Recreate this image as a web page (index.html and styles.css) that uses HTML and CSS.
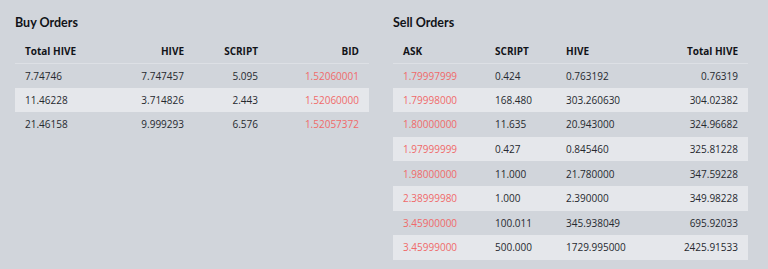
FILE: index.html
```html
<!DOCTYPE html>
<html>
<head>
<meta charset="utf-8">
<link rel="stylesheet" href="styles.css">
</head>
<body>
<div class="page">
  <section class="panel">
    <h2 class="title">Buy Orders</h2>
    <table class="orders buy">
      <colgroup><col class="b1"><col class="b2"><col class="b3"><col class="b4"></colgroup>
      <thead>
        <tr><th class="l">Total HIVE</th><th class="r">HIVE</th><th class="r">SCRIPT</th><th class="r">BID</th></tr>
      </thead>
      <tbody>
        <tr><td class="l">7.74746</td><td class="r">7.747457</td><td class="r">5.095</td><td class="r price">1.52060001</td></tr>
        <tr><td class="l">11.46228</td><td class="r">3.714826</td><td class="r">2.443</td><td class="r price">1.52060000</td></tr>
        <tr><td class="l">21.46158</td><td class="r">9.999293</td><td class="r">6.576</td><td class="r price">1.52057372</td></tr>
      </tbody>
    </table>
  </section>
  <section class="panel">
    <h2 class="title">Sell Orders</h2>
    <table class="orders sell">
      <colgroup><col class="s1"><col class="s2"><col class="s3"><col class="s4"></colgroup>
      <thead>
        <tr><th class="l">ASK</th><th class="l">SCRIPT</th><th class="l">HIVE</th><th class="r">Total HIVE</th></tr>
      </thead>
      <tbody>
        <tr><td class="l price">1.79997999</td><td class="l">0.424</td><td class="l">0.763192</td><td class="r">0.76319</td></tr>
        <tr><td class="l price">1.79998000</td><td class="l">168.480</td><td class="l">303.260630</td><td class="r">304.02382</td></tr>
        <tr><td class="l price">1.80000000</td><td class="l">11.635</td><td class="l">20.943000</td><td class="r">324.96682</td></tr>
        <tr><td class="l price">1.97999999</td><td class="l">0.427</td><td class="l">0.845460</td><td class="r">325.81228</td></tr>
        <tr><td class="l price">1.98000000</td><td class="l">11.000</td><td class="l">21.780000</td><td class="r">347.59228</td></tr>
        <tr><td class="l price">2.38999980</td><td class="l">1.000</td><td class="l">2.390000</td><td class="r">349.98228</td></tr>
        <tr><td class="l price">3.45900000</td><td class="l">100.011</td><td class="l">345.938049</td><td class="r">695.92033</td></tr>
        <tr><td class="l price">3.45999000</td><td class="l">500.000</td><td class="l">1729.995000</td><td class="r">2425.91533</td></tr>
      </tbody>
    </table>
  </section>
</div>
</body>
</html>
```
FILE: styles.css
```css
html, body {
  margin: 0;
  padding: 0;
  background: #d1d5db;
}
body {
  font-family: "Open Sans", "Noto Sans", sans-serif;
  color: #26292f;
}
.page {
  display: grid;
  grid-template-columns: 354px 355px;
  column-gap: 24px;
  padding: 14px 20px 0 15px;
}
.title {
  margin: 0 0 7px 0;
  font-family: Lato, "Open Sans", sans-serif;
  font-size: 12.5px;
  line-height: 18px;
  font-weight: 700;
  color: #111318;
}
.orders {
  width: 100%;
  border-collapse: collapse;
  table-layout: fixed;
}
.orders th {
  font-size: 10px;
  font-weight: 700;
  color: #111318;
  height: 24px;
  padding: 0 10px;
  border-bottom: 1px solid #dde0e5;
  box-sizing: border-box;
}
.orders td {
  font-size: 10px;
  height: 24.6px;
  padding: 0 10px;
  box-sizing: border-box;
}
.orders tbody tr:nth-child(even) {
  background: #e5e7eb;
}
.l { text-align: left; }
.r { text-align: right; }
.price { color: #f06a6a; }
.b1 { width: 88px; }
.b2 { width: 91px; }
.b3 { width: 74px; }
.b4 { width: 101px; }
.s1 { width: 92px; }
.s2 { width: 71px; }
.s3 { width: 90px; }
.s4 { width: 102px; }
```
